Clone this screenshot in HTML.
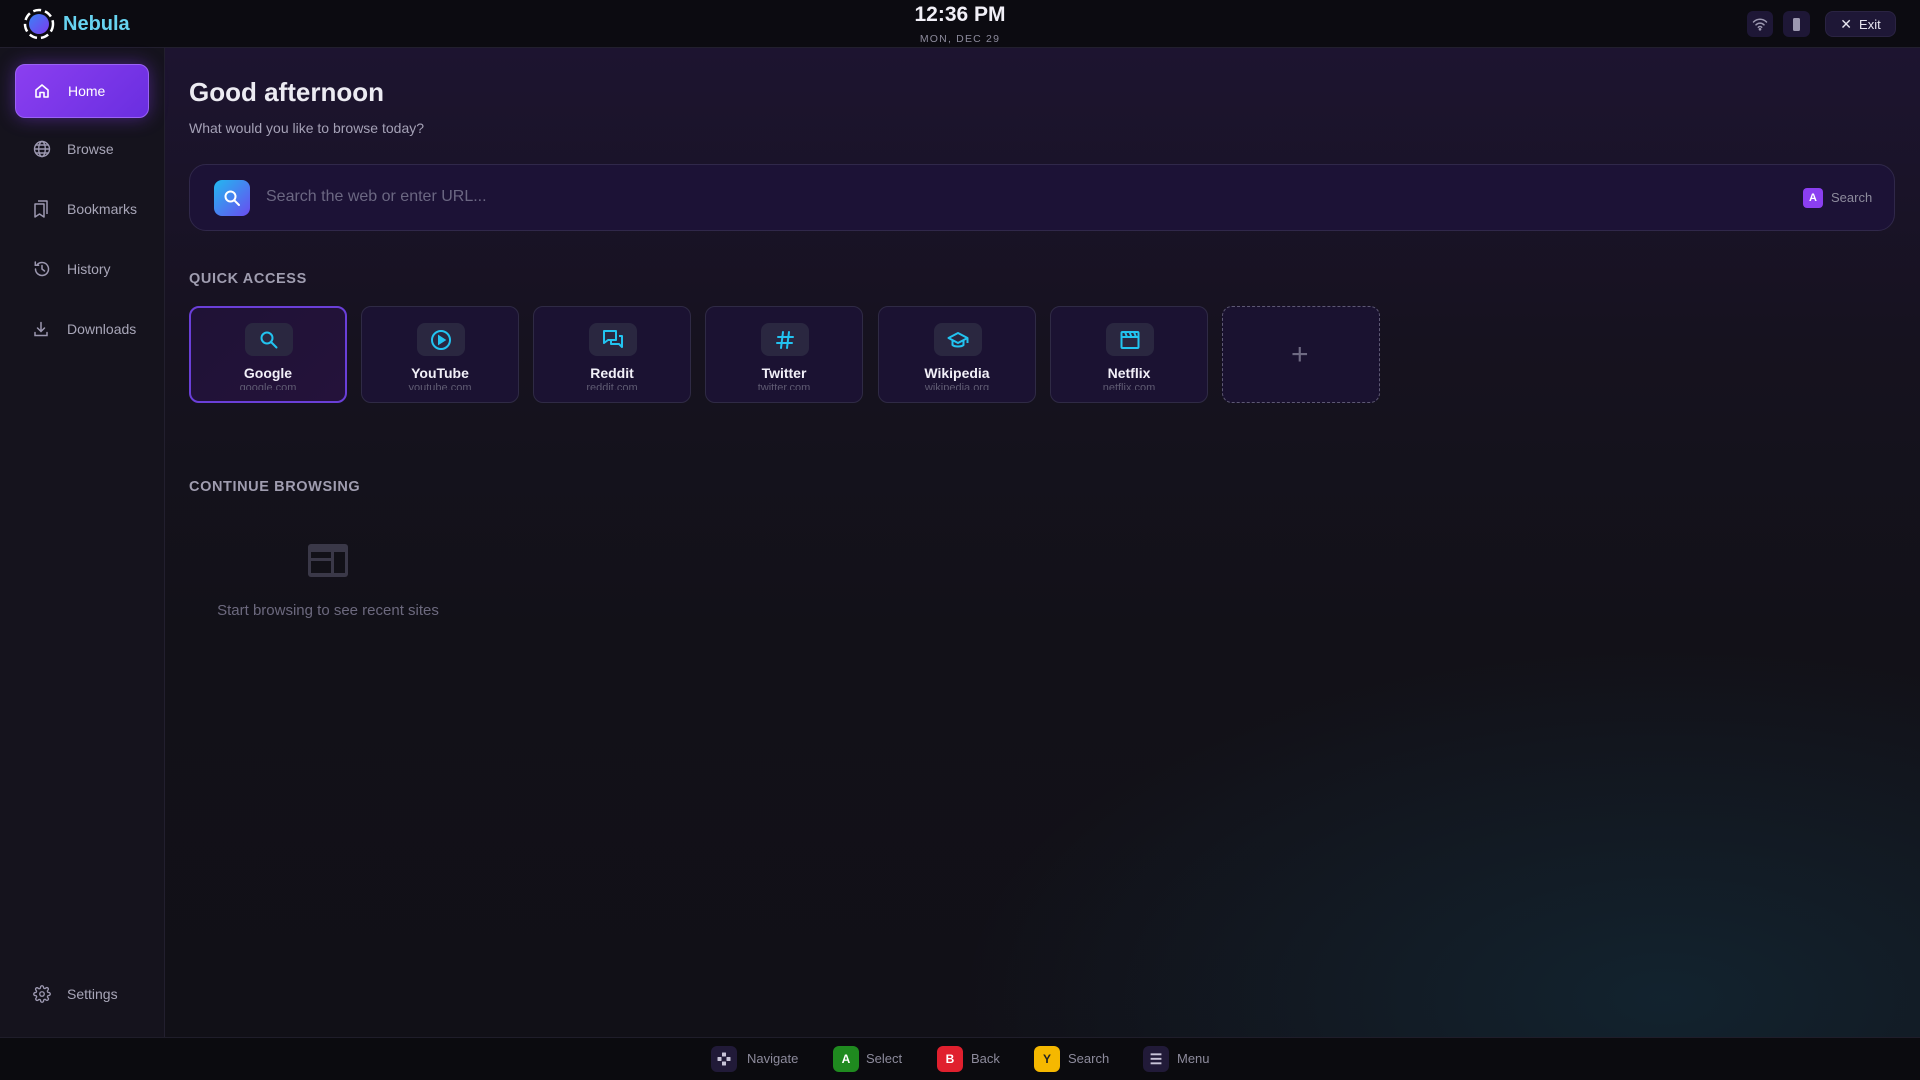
<!DOCTYPE html>
<html><head><meta charset="utf-8"><style>
*{margin:0;padding:0;box-sizing:border-box}
body{width:1920px;height:1080px;overflow:hidden;background:#111017;font-family:"Liberation Sans",sans-serif;color:#e8e6f0;position:relative}
.hdr{position:absolute;left:0;top:0;width:1920px;height:48px;background:#0c0b11;border-bottom:1px solid #221f2e}
.side{position:absolute;left:0;top:48px;width:165px;height:989px;background:#15131d;border-right:1px solid #221f2e}
.main{position:absolute;left:165px;top:48px;width:1755px;height:989px;background:radial-gradient(ellipse 700px 350px at 1500px 950px,rgba(20,70,90,.35),transparent),linear-gradient(180deg,#1d1430 0%,#16121f 30%,#121118 60%,#111017 100%)}
.ftr{position:absolute;left:0;top:1037px;width:1920px;height:43px;background:#0b0b0f;border-top:1px solid #1f1d2a}
.nav{position:absolute;left:15px;width:134px;height:54px;display:flex;align-items:center;font-size:14px;color:#a8a6b8}
.nav svg{position:absolute;left:18px}
.nav span{position:absolute;left:52px}
.home{background:linear-gradient(135deg,#8b3ff0,#6a2ee0);border-radius:10px;color:#fff;box-shadow:0 0 18px rgba(130,60,240,.45);border:1px solid #9a62f5}
.card{position:absolute;top:306px;width:158px;height:97px;border-radius:10px;background:#1b1232;border:1px solid #2f2a45;overflow:hidden}
.card .ib{position:absolute;left:55px;top:16px;width:48px;height:33px;border-radius:8px;background:#2a2740;display:flex;align-items:center;justify-content:center}
.card .nm{position:absolute;top:58px;width:100%;text-align:center;font-size:14px;font-weight:bold;color:#f2f0f8}
.card .dm{position:absolute;top:75px;width:100%;height:8px;overflow:hidden;text-align:center;font-size:11px;line-height:13px;color:#5f5b72}
.fi{position:absolute;top:1046px;width:26px;height:26px;border-radius:6px;display:flex;align-items:center;justify-content:center;font-size:12px;font-weight:bold}
.ft{position:absolute;top:1051px;font-size:13px;color:#8d8b9c}
</style></head><body>
<div class="hdr"></div>
<div class="side"></div>
<div class="main"></div>
<div class="ftr"></div>

<svg style="position:absolute;left:22px;top:7px" width="34" height="34" viewBox="0 0 34 34"><defs><linearGradient id="lg" x1="0" y1="0" x2="1" y2="1"><stop offset="0" stop-color="#3b82f6"/><stop offset="1" stop-color="#7c3aed"/></linearGradient></defs><circle cx="17" cy="17" r="10" fill="url(#lg)"/><circle cx="17" cy="17" r="14" fill="none" stroke="#fff" stroke-width="2.5" stroke-dasharray="8 4"/></svg>
<div style="position:absolute;left:63px;top:13px;font-size:20px;font-weight:bold;color:#67d3f0">Nebula</div>
<div style="position:absolute;left:860px;top:3px;width:200px;text-align:center;font-size:21px;font-weight:bold;color:#f2f0f8">12:36 PM</div>
<div style="position:absolute;left:860px;top:33px;width:200px;text-align:center;font-size:10.5px;letter-spacing:1.2px;color:#8d8b9c">MON, DEC 29</div>
<div style="position:absolute;left:1747px;top:11px;width:26px;height:26px;border-radius:6px;background:#1e1736;display:flex;align-items:center;justify-content:center"><svg width="16" height="14" viewBox="0 0 16 14" fill="none" stroke="#9c98b0" stroke-width="1.5" stroke-linecap="round"><path d="M1.5 5a9 9 0 0 1 13 0M4 7.8a5.5 5.5 0 0 1 8 0M6.3 10.3a2.3 2.3 0 0 1 3.4 0"/><circle cx="8" cy="12.3" r=".6" fill="#9c98b0"/></svg></div>
<div style="position:absolute;left:1783px;top:11px;width:27px;height:26px;border-radius:6px;background:#1e1736;display:flex;align-items:center;justify-content:center"><div style="width:7px;height:13px;background:#9c98b0;border-radius:1.5px"></div></div>
<div style="position:absolute;left:1825px;top:11px;width:71px;height:26px;border-radius:8px;background:#1e1736;border:1px solid #2a2342;display:flex;align-items:center;justify-content:center;font-size:13px;color:#e8e6f0"><span style="font-size:14px;margin-right:7px">✕</span>Exit</div>

<div class="nav home" style="top:64px"><svg width="16" height="16" viewBox="0 0 16 16" fill="none" stroke="#fff" stroke-width="1.6" stroke-linejoin="round"><path d="M2 7l6-5 6 5v7H10V9.5H6V14H2z"/></svg><span>Home</span></div>
<div class="nav" style="top:122px"><svg width="18" height="18" viewBox="0 0 18 18" fill="none" stroke="#9c98b0" stroke-width="1.4"><circle cx="9" cy="9" r="7.5"/><ellipse cx="9" cy="9" rx="3.3" ry="7.5"/><path d="M1.5 9h15M2.6 5h12.8M2.6 13h12.8"/></svg><span>Browse</span></div>
<div class="nav" style="top:182px"><svg width="16" height="18" viewBox="0 0 16 18" fill="none" stroke="#9c98b0" stroke-width="1.5" stroke-linejoin="round"><path d="M2 4h9v13l-4.5-3L2 17z"/><path d="M5 1h9v13"/></svg><span>Bookmarks</span></div>
<div class="nav" style="top:242px"><svg width="18" height="18" viewBox="0 0 18 18" fill="none" stroke="#9c98b0" stroke-width="1.5" stroke-linecap="round"><path d="M2.5 9a6.5 6.5 0 1 0 2-4.7"/><path d="M2.3 2v3.3h3.3M9 5.5V9l2.5 2"/></svg><span>History</span></div>
<div class="nav" style="top:302px"><svg width="16" height="16" viewBox="0 0 16 16" fill="none" stroke="#9c98b0" stroke-width="1.5" stroke-linecap="round"><path d="M8 1.5v9M4.5 7L8 10.5 11.5 7M2 11.5v3h12v-3"/></svg><span>Downloads</span></div>
<div class="nav" style="top:967px"><svg width="18" height="18" viewBox="0 0 24 24" fill="none" stroke="#9c98b0" stroke-width="1.8"><circle cx="12" cy="12" r="3"/><path d="M19.4 15a1.6 1.6 0 0 0 .3 1.8l.1.1a2 2 0 1 1-2.8 2.8l-.1-.1a1.6 1.6 0 0 0-1.8-.3 1.6 1.6 0 0 0-1 1.5V21a2 2 0 1 1-4 0v-.1a1.6 1.6 0 0 0-1-1.5 1.6 1.6 0 0 0-1.8.3l-.1.1a2 2 0 1 1-2.8-2.8l.1-.1a1.6 1.6 0 0 0 .3-1.8 1.6 1.6 0 0 0-1.5-1H3a2 2 0 1 1 0-4h.1a1.6 1.6 0 0 0 1.5-1 1.6 1.6 0 0 0-.3-1.8l-.1-.1a2 2 0 1 1 2.8-2.8l.1.1a1.6 1.6 0 0 0 1.8.3H9a1.6 1.6 0 0 0 1-1.5V3a2 2 0 1 1 4 0v.1a1.6 1.6 0 0 0 1 1.5 1.6 1.6 0 0 0 1.8-.3l.1-.1a2 2 0 1 1 2.8 2.8l-.1.1a1.6 1.6 0 0 0-.3 1.8V9a1.6 1.6 0 0 0 1.5 1H21a2 2 0 1 1 0 4h-.1a1.6 1.6 0 0 0-1.5 1z"/></svg><span>Settings</span></div>

<div style="position:absolute;left:189px;top:77px;font-size:26px;font-weight:bold;color:#ecebf2">Good afternoon</div>
<div style="position:absolute;left:189px;top:120px;font-size:14px;color:#a4a1b6">What would you like to browse today?</div>

<div style="position:absolute;left:189px;top:164px;width:1706px;height:67px;border-radius:17px;background:#1c1236;border:1px solid #30284a"></div>
<div style="position:absolute;left:214px;top:180px;width:36px;height:36px;border-radius:8px;background:linear-gradient(135deg,#22b8f0,#6a4cf0);display:flex;align-items:center;justify-content:center"><svg width="18" height="18" viewBox="0 0 18 18" fill="none" stroke="#fff" stroke-width="2" stroke-linecap="round"><circle cx="7.5" cy="7.5" r="5"/><path d="M11.3 11.3L16 16"/></svg></div>
<div style="position:absolute;left:266px;top:188px;font-size:16px;color:#6b6782">Search the web or enter URL...</div>
<div style="position:absolute;left:1803px;top:188px;width:20px;height:20px;border-radius:4px;background:#8b3ff0;color:#fff;font-size:11px;font-weight:bold;display:flex;align-items:center;justify-content:center">A</div>
<div style="position:absolute;left:1831px;top:190px;font-size:13px;color:#8d8b9c">Search</div>

<div style="position:absolute;left:189px;top:271px;font-size:14.5px;font-weight:bold;letter-spacing:.6px;color:#a09db0">QUICK ACCESS</div>

<div class="card" style="left:189px;border:2px solid #6a3fd8;background:linear-gradient(135deg,#1f1236,#24123a)"><div class="ib" style="left:54px;top:15px"><svg width="20" height="20" viewBox="0 0 20 20" fill="none" stroke="#22c3f0" stroke-width="2" stroke-linecap="round"><circle cx="8" cy="8" r="5.5"/><path d="M12 12l5.5 5.5"/></svg></div><div class="nm" style="top:57px">Google</div><div class="dm" style="top:74px">google.com</div></div>
<div class="card" style="left:361px"><div class="ib"><svg width="22" height="22" viewBox="0 0 22 22" fill="none" stroke="#22c3f0" stroke-width="2"><circle cx="11" cy="11" r="9"/><path d="M9 7.5v7l5.5-3.5z" fill="#22c3f0"/></svg></div><div class="nm">YouTube</div><div class="dm">youtube.com</div></div>
<div class="card" style="left:533px"><div class="ib"><svg width="22" height="22" viewBox="0 0 22 22" fill="none" stroke="#22c3f0" stroke-width="2" stroke-linejoin="round"><path d="M2 2h12v9H6l-4 3z"/><path d="M17 7h3v11l-3-3H9v-4"/></svg></div><div class="nm">Reddit</div><div class="dm">reddit.com</div></div>
<div class="card" style="left:705px"><div class="ib"><svg width="20" height="20" viewBox="0 0 20 20" fill="none" stroke="#22c3f0" stroke-width="2" stroke-linecap="round"><path d="M3 7h15M2 13h15M8 2L6 18M14 2l-2 16"/></svg></div><div class="nm">Twitter</div><div class="dm">twitter.com</div></div>
<div class="card" style="left:878px"><div class="ib"><svg width="22" height="22" viewBox="0 0 22 22" fill="none" stroke="#22c3f0" stroke-width="2" stroke-linejoin="round"><path d="M1.5 9L11 4l9.5 5-9.5 5z"/><path d="M5.5 11v5c2 2 9 2 11 0v-5M20.5 9v5"/></svg></div><div class="nm">Wikipedia</div><div class="dm">wikipedia.org</div></div>
<div class="card" style="left:1050px"><div class="ib"><svg width="22" height="22" viewBox="0 0 22 22" fill="none" stroke="#22c3f0" stroke-width="2" stroke-linejoin="round"><rect x="2.5" y="3" width="17" height="16" rx="1"/><path d="M2.5 8h17M6 3l2 5M10.5 3l2 5M15 3l2 5"/></svg></div><div class="nm">Netflix</div><div class="dm">netflix.com</div></div>
<div class="card" style="left:1222px;border:1.5px dashed #5d5873;background:#1a1230"><div style="position:absolute;left:68px;top:38px;font-size:30px;line-height:20px;color:#6e6a82;font-weight:300">+</div></div>

<div style="position:absolute;left:189px;top:479px;font-size:14.5px;font-weight:bold;letter-spacing:.6px;color:#a09db0">CONTINUE BROWSING</div>
<svg style="position:absolute;left:308px;top:544px" width="40" height="33" viewBox="0 0 40 33"><rect x="0" y="0" width="40" height="33" rx="3" fill="#3a3848"/><rect x="3" y="8" width="20" height="6" fill="#121118"/><rect x="3" y="17" width="20" height="12" fill="#121118"/><rect x="26" y="8" width="11" height="21" fill="#121118"/></svg>
<div style="position:absolute;left:178px;top:602px;width:300px;text-align:center;font-size:15px;color:#6c697e">Start browsing to see recent sites</div>

<div class="fi" style="left:711px;background:#211a38"><svg width="14" height="14" viewBox="0 0 14 14" fill="#c8c4d8"><rect x="5" y="0.5" width="4" height="4" rx=".5"/><rect x="5" y="9.5" width="4" height="4" rx=".5"/><rect x="0.5" y="5" width="4" height="4" rx=".5"/><rect x="9.5" y="5" width="4" height="4" rx=".5"/></svg></div>
<div class="ft" style="left:747px">Navigate</div>
<div class="fi" style="left:833px;background:#1f8a1f;color:#fff">A</div>
<div class="ft" style="left:866px">Select</div>
<div class="fi" style="left:937px;background:#e0202e;color:#fff">B</div>
<div class="ft" style="left:971px">Back</div>
<div class="fi" style="left:1034px;background:#f5b800;color:#222">Y</div>
<div class="ft" style="left:1068px">Search</div>
<div class="fi" style="left:1143px;background:#211a38;color:#c8c4d8;font-size:14px">☰</div>
<div class="ft" style="left:1177px">Menu</div>
</body></html>
